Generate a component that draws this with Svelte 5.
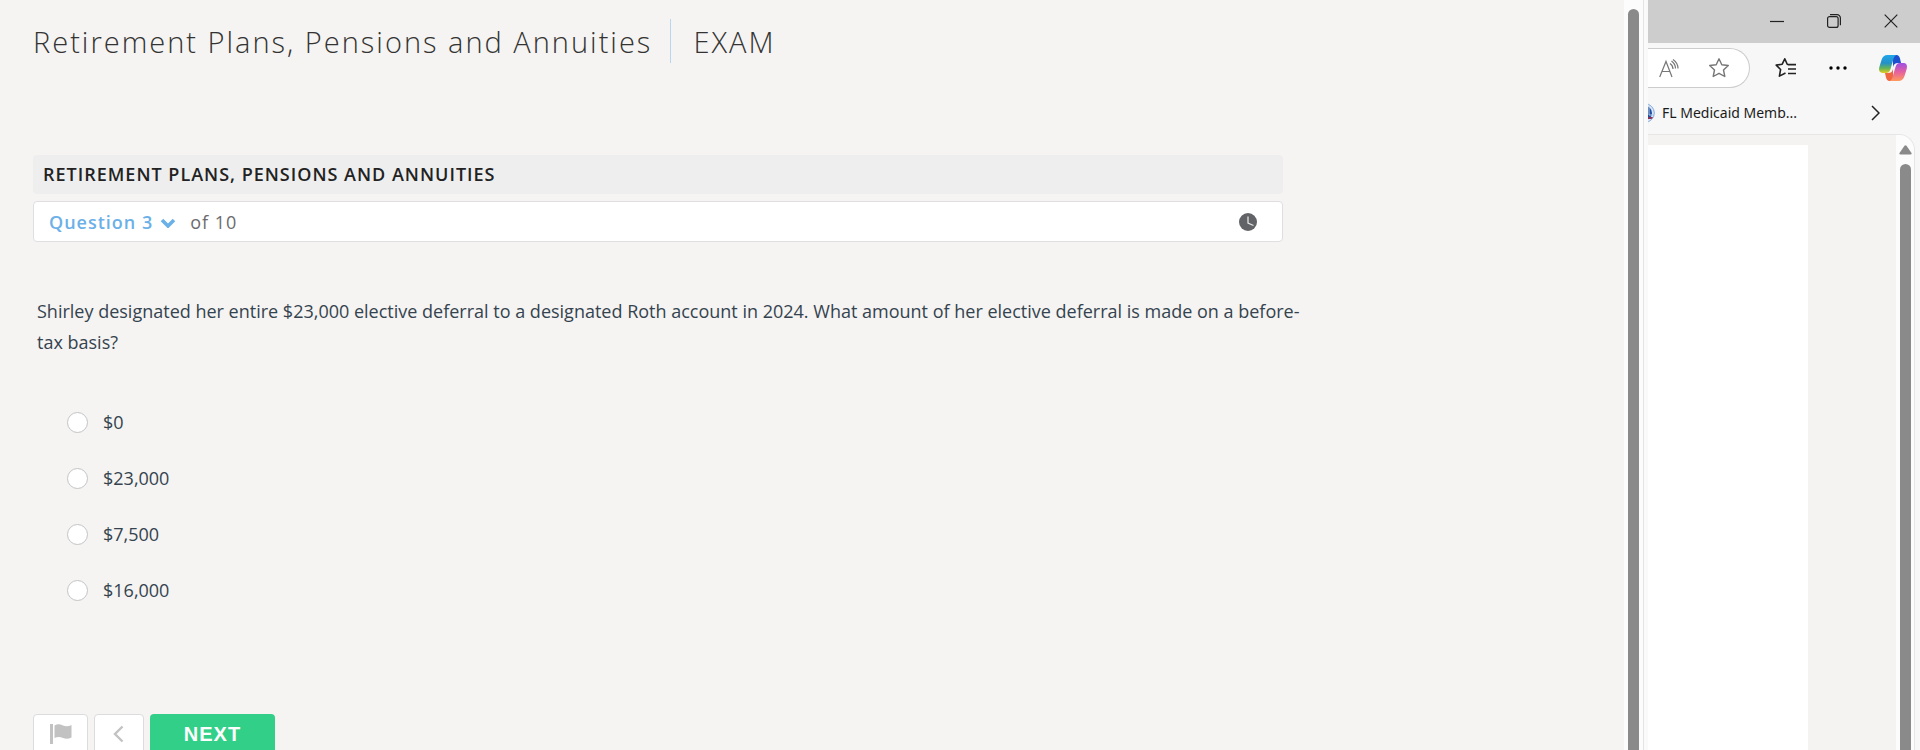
<script>
    const courseTitle = "Retirement Plans, Pensions and Annuities";
    const questionCount = 10;
    const options = ["$0", "$23,000", "$7,500", "$16,000"];

    let current = 3;
    let selected = null;
    let flagged = false;

    function goTo(number) {
        current = Math.min(Math.max(number, 1), questionCount);
        selected = null;
        flagged = false;
    }
</script>

<div class="desktop">
    <div class="exam-window">
        <main class="exam">
            <header class="exam-header">
                <h1>{courseTitle}</h1>
                <span class="mode">EXAM</span>
            </header>

            <div class="exam-body">
                <h2>{courseTitle}</h2>
                <div class="question-bar">
                    <button class="question-picker" type="button">
                        Question {current}
                        <svg width="16" height="12" viewBox="0 0 16 12">
                            <path
                                d="M2 4l6 6 6-6"
                                fill="none"
                                stroke="currentColor"
                                stroke-width="3.6"
                            />
                        </svg>
                    </button>
                    <span class="total">of {questionCount}</span>
                    <button class="timer" type="button" aria-label="Show time">
                        <svg width="18" height="18" viewBox="0 0 18 18">
                            <circle cx="9" cy="9" r="9" fill="#626366" />
                            <path
                                d="M9 3.5V10l5.5 2.5"
                                fill="none"
                                stroke="#e4e4e4"
                                stroke-width="1.3"
                            />
                        </svg>
                    </button>
                </div>

                <form on:submit|preventDefault={() => goTo(current + 1)}>
                    <fieldset>
                        <legend>
                            Shirley designated her entire $23,000 elective
                            deferral to a designated Roth account in 2024. What
                            amount of her elective deferral is made on a
                            before-tax basis?
                        </legend>
                        {#each options as option, i}
                            <label class="option">
                                <input
                                    type="radio"
                                    name="answer"
                                    value={i}
                                    bind:group={selected}
                                />
                                {option}
                            </label>
                        {/each}
                    </fieldset>

                    <div class="controls">
                        <button
                            class="flag"
                            class:flagged
                            type="button"
                            aria-label="Flag question"
                            on:click={() => (flagged = !flagged)}
                        >
                            <svg width="22" height="20" viewBox="0 0 22 20">
                                <path
                                    d="M0 0h3v20H0zM4.5 1.5c3-1.8 5.5-1.5 8.500 0 3 1.300 5.500 1 8.500-.5v12.500c-3 1.500-5.500 1.800-8.500.5-3-1.400-5.500-1.500-8.500 0z"
                                    fill="currentColor"
                                />
                            </svg>
                        </button>
                        <button
                            class="previous"
                            type="button"
                            aria-label="Previous question"
                            on:click={() => goTo(current - 1)}
                        >
                            <svg width="12" height="18" viewBox="0 0 12 18">
                                <path
                                    d="M9.500 1.500L2 9l7.500 7.500"
                                    fill="none"
                                    stroke="currentColor"
                                    stroke-width="2.400"
                                />
                            </svg>
                        </button>
                        <button class="next" type="submit">NEXT</button>
                    </div>
                </form>
            </div>
        </main>
        <div class="scroll-track exam-scroll">
            <div class="thumb"></div>
        </div>
    </div>

    <div class="browser">
        <div class="title-bar">
            <button type="button" aria-label="Minimize">
                <svg width="14" height="14" viewBox="0 0 14 14">
                    <path d="M0 7.5h14" />
                </svg>
            </button>
            <button type="button" aria-label="Restore">
                <svg width="14" height="14" viewBox="0 0 14 14">
                    <rect x=".6" y="2.6" width="10.5" height="10.8" rx="2" />
                    <path d="M3 .6h7a3.4 3.4 0 0 1 3.4 3.4v7.2" />
                </svg>
            </button>
            <button type="button" aria-label="Close">
                <svg width="14" height="14" viewBox="0 0 14 14">
                    <path d="M.7.7l12.6 12.6M13.3.7L.7 13.3" />
                </svg>
            </button>
        </div>

        <div class="toolbar">
            <div class="address">
                <button type="button" aria-label="Read aloud">
                    <svg width="20" height="19" viewBox="0 0 20 19">
                        <path
                            d="M.7 18L7 2.500 13 18M2.800 12.500h8M11 4.500q3 2 3 5.500M12.500 2q4 3 4 7.500M14 .6q5 3.500 5 9"
                            fill="none"
                            stroke="#777"
                            stroke-width="1.2"
                        />
                    </svg>
                </button>
                <button type="button" aria-label="Add to favorites">
                    <svg width="22" height="22" viewBox="0 0 22 22">
                        <path
                            d="M11 1.8l2.8 5.9 6.5.8-4.8 4.5 1.3 6.5-5.8-3.2-5.8 3.2 1.3-6.5L1.700 8.500l6.500-.8z"
                            fill="none"
                            stroke="#777"
                            stroke-width="1.4"
                            stroke-linejoin="round"
                        />
                    </svg>
                </button>
            </div>
            <div class="actions">
                <button type="button" aria-label="Favorites">
                    <svg width="22" height="22" viewBox="0 0 22 22">
                        <path
                            d="M13.5 7.5l-1.3-.2L9.8 1.8 7.2 7.200l-6 .9 4.400 4.400-1.200 6.600L10.500 16M12.500 7.600H21M13 12h8M13 16.500h8"
                            fill="none"
                            stroke="#222"
                            stroke-width="1.6"
                            stroke-linejoin="round"
                        />
                    </svg>
                </button>
                <button type="button" aria-label="Settings and more">
                    <svg width="18" height="4" viewBox="0 0 18 4">
                        <circle cx="2" cy="2" r="1.7" />
                        <circle cx="9" cy="2" r="1.7" />
                        <circle cx="16" cy="2" r="1.7" />
                    </svg>
                </button>
                <button type="button" aria-label="Copilot">
                    <svg width="28" height="26" viewBox="0 0 28 26">
                        <defs>
                            <linearGradient id="cool" x1="0" y1="0" x2="0" y2="1">
                                <stop offset="0" stop-color="#21a6ea" />
                                <stop offset=".45" stop-color="#2490c8" />
                                <stop offset=".75" stop-color="#69b653" />
                                <stop offset="1" stop-color="#e8cb20" />
                            </linearGradient>
                            <linearGradient id="warm" x1="0" y1="0" x2="0" y2="1">
                                <stop offset="0" stop-color="#9c50e5" />
                                <stop offset=".5" stop-color="#e5609f" />
                                <stop offset="1" stop-color="#ff9a5c" />
                            </linearGradient>
                        </defs>
                        <path
                            d="M14 0h3.500c2 0 2.800 1.200 3.500 3.500L22 8h-3c-3 0-4 1-5 4z"
                            fill="#1d50ce"
                        />
                        <path
                            d="M14 26h-3.500c-2 0-2.800-1.200-3.500-3.500L6 18h3c3 0 4-1 5-4z"
                            fill="#ee6740"
                        />
                        <path
                            d="M8.500 0h9c-2 .5-2.600 2.500-3.200 4.500L11.500 14c-.8 2.700-2 4-4.500 4H3.500C0 18-.5 15 .5 11.500l2-6.500C3.600 1.500 5.500 0 8.500 0z"
                            fill="url(#cool)"
                        />
                        <path
                            d="M19.500 26h-9c2-.5 2.600-2.500 3.200-4.500l2.800-9.500c.8-2.700 2-4 4.500-4h3.500c3.500 0 4 3 3 6.500l-2 6.500c-1.100 3.500-3 5-6 5z"
                            fill="url(#warm)"
                        />
                    </svg>
                </button>
            </div>
        </div>

        <div class="bookmarks">
            <a href="#medicaid">
                <svg width="7" height="20" viewBox="0 0 7 20">
                    <circle cx="-3" cy="10" r="9.3" fill="#dce8f7" stroke="#80a7dc" />
                    <circle cx="-3" cy="10" r="7" fill="#204f9d" />
                    <path d="M1 3v9h4" fill="none" stroke="#b6cbe8" />
                    <path d="M0 14h5l-1.5 2H0z" fill="#8b3158" />
                </svg>
                FL Medicaid Memb...
            </a>
            <button type="button" aria-label="More bookmarks">
                <svg width="9" height="16" viewBox="0 0 9 16">
                    <path
                        d="M1 1l7 7-7 7"
                        fill="none"
                        stroke="#222"
                        stroke-width="1.5"
                    />
                </svg>
            </button>
        </div>

        <div class="viewport">
            <div class="page"></div>
            <div class="scroll-track browser-scroll">
                <svg width="13" height="10" viewBox="0 0 13 10">
                    <path
                        d="M5.5.8q1-1 2 0l5 7.200q.6 1.500-1 1.500h-10q-1.600 0-1-1.500z"
                        fill="#8a8a8a"
                    />
                </svg>
                <div class="thumb"></div>
            </div>
        </div>
    </div>
</div>

<style>
    :global(body) {
        margin: 0;
        background: #f5f3f2;
    }

    .desktop {
        display: flex;
        height: 100vh;
        overflow: hidden;
        font-family: "Open Sans", sans-serif;
        font-size: 18px;
        color: #34434f;
    }

    button {
        display: flex;
        align-items: center;
        justify-content: center;
        box-sizing: border-box;
        padding: 0;
        border: 0;
        background: none;
        font: inherit;
        color: inherit;
        cursor: pointer;
    }

    svg {
        display: block;
        flex-shrink: 0;
    }

    .exam-window {
        display: flex;
        flex: 1;
        background: #f5f4f2;
    }

    .exam {
        flex: 1;
        padding: 19px 32px 0 33px;
    }

    .exam-header {
        display: flex;
        height: 44px;
        color: #333;
        font-size: 29px;
        font-weight: 300;
        line-height: 46px;
        letter-spacing: 2px;
    }

    h1 {
        margin: 0;
        padding-right: 18px;
        border-right: 1px solid #b4d8f2;
        font: inherit;
    }

    .mode {
        padding-left: 22px;
    }

    .exam-body {
        margin-top: 92px;
    }

    h2,
    .question-bar {
        box-sizing: border-box;
        max-width: 1250px;
        border-radius: 4px;
        letter-spacing: 1px;
    }

    h2 {
        margin: 0 0 7px;
        padding: 0 10px;
        background: #eee;
        color: #222;
        font-size: 18px;
        font-weight: 600;
        line-height: 39px;
        text-transform: uppercase;
    }

    .question-bar {
        display: flex;
        align-items: center;
        height: 41px;
        padding: 0 25px 0 15px;
        border: 1px solid #dfdfe2;
        background: #fff;
    }

    .question-picker {
        gap: 7px;
        color: #6cb0e8;
        font-weight: 600;
        letter-spacing: inherit;
    }

    .total {
        margin-left: 14px;
        color: #6b6b6e;
    }

    .timer {
        margin-left: auto;
    }

    fieldset {
        margin: 0;
        padding: 0;
        border: 0;
    }

    legend {
        max-width: 1270px;
        padding: 54px 4px 52px;
        line-height: 31px;
    }

    .option {
        display: flex;
        align-items: center;
        gap: 15px;
        width: fit-content;
        height: 24px;
        margin: 0 0 32px 34px;
    }

    .option input {
        appearance: none;
        width: 21px;
        height: 21px;
        margin: 0;
        border: 1px solid #c4c4c6;
        border-radius: 50%;
        background: #fff;
    }

    .option input:checked {
        border: 6px solid #6cb0e8;
    }

    .controls {
        display: flex;
        gap: 6px;
        padding-top: 80px;
    }

    .controls button {
        height: 40px;
        border-radius: 4px;
    }

    .controls .flag,
    .controls .previous {
        width: 55px;
        border: 1px solid #dcdcde;
        background: #fff;
        color: #c2c2c2;
    }

    .controls .previous {
        width: 50px;
    }

    .controls .flagged {
        color: #6cb0e8;
    }

    .controls .next {
        width: 125px;
        background: #32cf89;
        color: #fff;
        font-family: "Liberation Sans", Arial, sans-serif;
        font-size: 20px;
        font-weight: bold;
        letter-spacing: 1px;
    }

    .scroll-track {
        display: flex;
        flex-direction: column;
        align-items: center;
        box-sizing: border-box;
        background: #fcfcfc;
    }

    .thumb {
        flex: 1;
        width: 11px;
        border-radius: 6px 6px 0 0;
        background: #8a8a8a;
    }

    .exam-scroll {
        width: 20px;
        padding-top: 9px;
        border-right: 1px solid #e4e4e4;
    }

    .browser {
        display: flex;
        flex-direction: column;
        width: 272px;
        border-left: 4px solid #fafafa;
        background: #f7f7f7;
        color: #1b1b1b;
    }

    .title-bar {
        display: flex;
        justify-content: flex-end;
        box-sizing: border-box;
        height: 43px;
        padding: 0 1px 1px 0;
        background: #cdcdcd;
    }

    .title-bar button {
        width: 57px;
    }

    .title-bar svg {
        fill: none;
        stroke: #222;
        stroke-width: 1.2px;
    }

    .toolbar {
        display: flex;
        align-items: center;
        height: 50px;
        padding-right: 13px;
    }

    .address {
        display: flex;
        align-items: center;
        justify-content: flex-end;
        gap: 29px;
        box-sizing: border-box;
        width: 102px;
        height: 40px;
        margin-right: 25px;
        padding-right: 19px;
        border: 1px solid #ccc;
        border-left: 0;
        border-radius: 0 20px 20px 0;
        background: #fff;
    }

    .actions {
        display: flex;
        flex: 1;
        align-items: center;
        justify-content: space-between;
    }

    .bookmarks {
        display: flex;
        align-items: center;
        justify-content: space-between;
        height: 39px;
        margin-bottom: 2px;
        padding-right: 40px;
    }

    .bookmarks a {
        display: flex;
        align-items: center;
        gap: 7px;
        color: #1b1b1b;
        font-family: "Noto Sans", sans-serif;
        font-size: 14px;
        text-decoration: none;
    }

    .viewport {
        display: flex;
        flex: 1;
        justify-content: space-between;
        margin-right: 5px;
        border-top: 1px solid #e6e6e6;
        border-right: 1px solid #e6e6e6;
        border-radius: 0 16px 0 0;
        background: #f4f3f2;
        overflow: hidden;
    }

    .page {
        width: 160px;
        margin-top: 10px;
        background: #fff;
    }

    .browser-scroll {
        gap: 9px;
        width: 18px;
        padding-top: 10px;
    }
</style>
